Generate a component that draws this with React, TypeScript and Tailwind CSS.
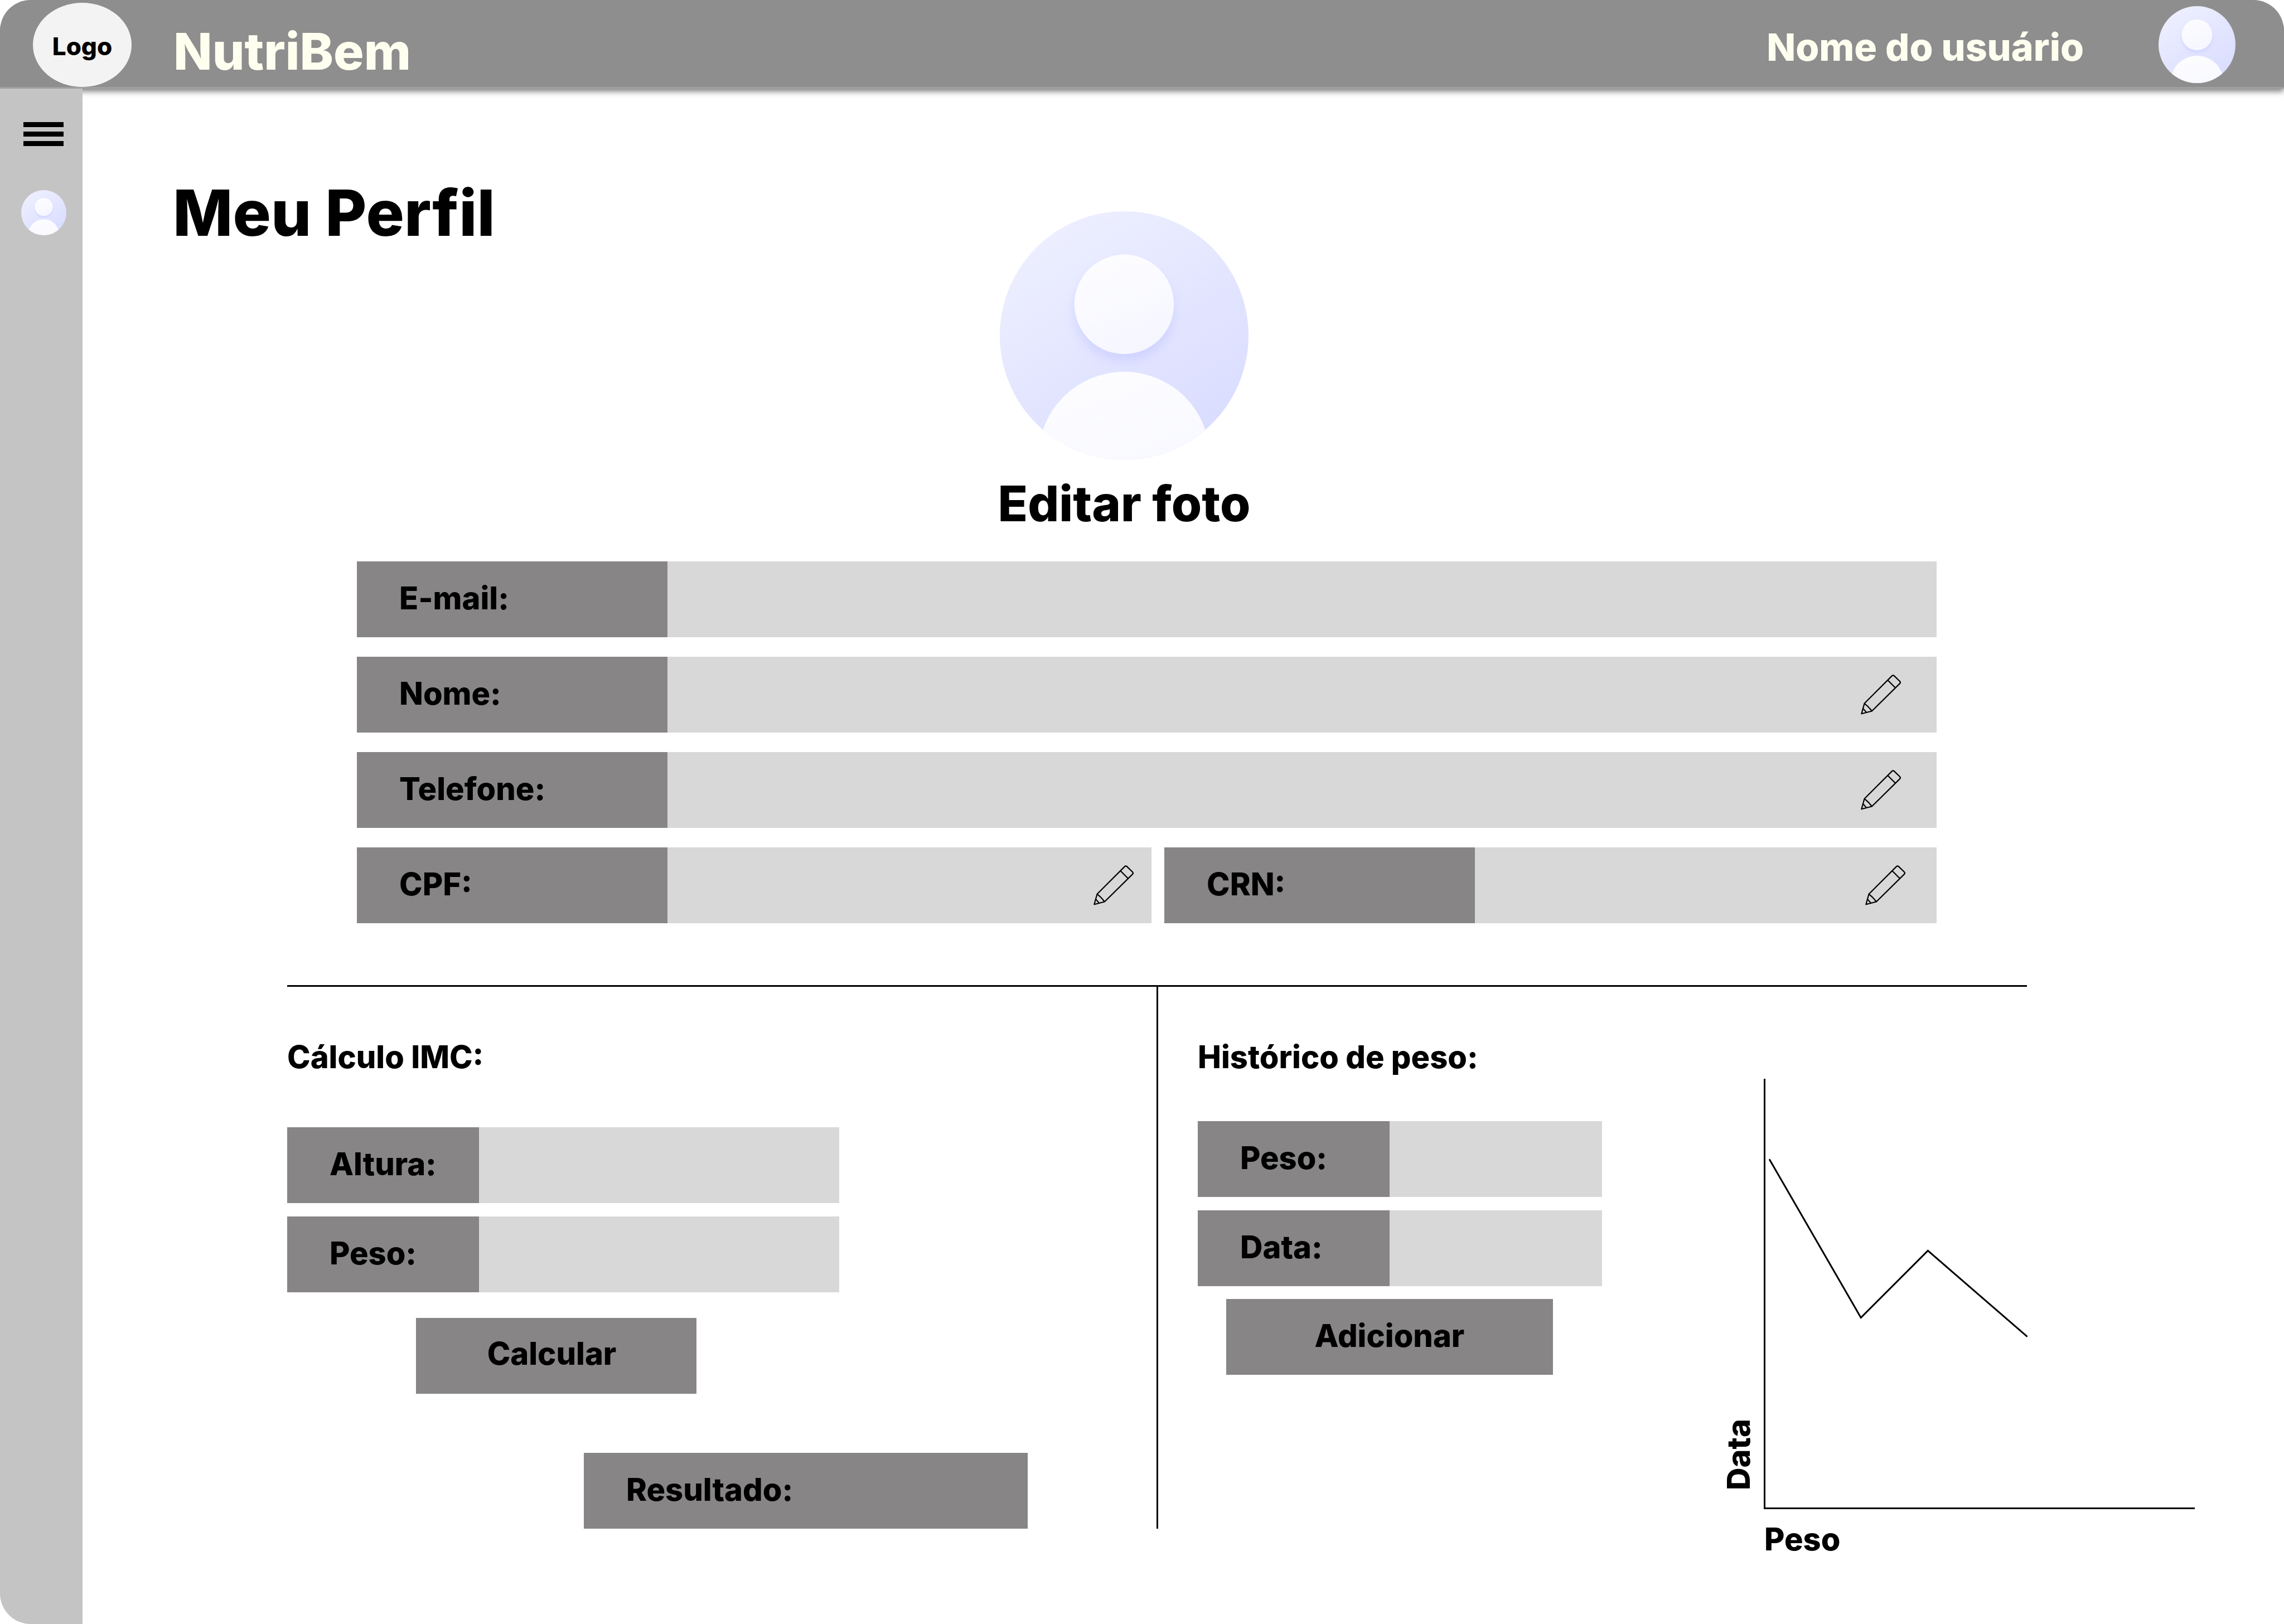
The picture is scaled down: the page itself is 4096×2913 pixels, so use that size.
import { useId } from "react";
import type { ReactNode } from "react";

function Avatar({ className }: { className: string }) {
  const id = useId();
  return (
    <svg viewBox="0 0 100 100" className={className} aria-hidden="true">
      <defs>
        <linearGradient id={`${id}bg`} x1="0.2" y1="0" x2="0.85" y2="1">
          <stop offset="0" stopColor="#eef0ff" />
          <stop offset="1" stopColor="#d8dbff" />
        </linearGradient>
        <linearGradient id={`${id}fg`} x1="0.3" y1="0" x2="0.7" y2="1">
          <stop offset="0" stopColor="#fdfdff" />
          <stop offset="1" stopColor="#f5f6ff" />
        </linearGradient>
        <clipPath id={`${id}clip`}>
          <circle cx="50" cy="50" r="50" />
        </clipPath>
        <filter id={`${id}soft`} x="-30%" y="-30%" width="160%" height="160%">
          <feDropShadow dx="0" dy="3" stdDeviation="2.2" floodColor="#b9bfff" floodOpacity="0.45" />
        </filter>
      </defs>
      <g clipPath={`url(#${id}clip)`}>
        <rect width="100" height="100" fill={`url(#${id}bg)`} />
        <circle cx="50" cy="99" r="34.5" fill={`url(#${id}fg)`} />
        <circle cx="50" cy="37.4" r="20" fill={`url(#${id}fg)`} filter={`url(#${id}soft)`} />
      </g>
    </svg>
  );
}

function Pencil() {
  return (
    <svg viewBox="0 0 105 105" className="size-[72px]" fill="none" stroke="#000" strokeWidth="3.2" strokeLinejoin="round" aria-hidden="true">
      <path d="M2 102.500 L9.500 75.500 L81.500 3.500 Q84.500 .500 87.500 3.500 L102 17.500 Q105 20.500 102 23.500 L29 95.500 Z" />
      <path d="M70.500 14.500 L90.500 34.500 M9.500 75.500 Q20 83 29 95.500 M6 89 L15 99" />
    </svg>
  );
}

type FieldProps = {
  id: string;
  label: string;
  labelWidth: string;
  editPadding?: string;
};

function Field({ id, label, labelWidth, editPadding }: FieldProps) {
  return (
    <div className="flex h-34 min-w-0 bg-[#d8d8d8]">
      <label htmlFor={id} className={`flex shrink-0 items-center bg-[#878585] pb-1 pl-[76px] ${labelWidth}`}>
        {label}
      </label>
      <input id={id} className="min-w-0 flex-1 bg-transparent px-8 font-normal outline-none" />
      {editPadding && (
        <button type="button" aria-label={`Editar ${label}`} className={`flex shrink-0 items-center ${editPadding}`}>
          <Pencil />
        </button>
      )}
    </div>
  );
}

function Heading({ children }: { children: ReactNode }) {
  return <h2 className="leading-16">{children}</h2>;
}

export default function App() {
  return (
    <div className="flex min-h-screen flex-col overflow-hidden rounded-[55px] bg-white font-['Inter',sans-serif] text-[56px] leading-16 font-extrabold text-black">
      <header className="relative flex h-[159px] items-center border-b-3 border-[#a0a0a0] bg-[#8e8e8e] pr-[87px] pl-[59px] text-[#fffff0] shadow-[0_5px_10px_rgba(0,0,0,0.5)]">
        <div className="mt-[5px] flex h-[151px] w-[177px] items-center justify-center rounded-[50%] bg-[#f3f3f3] pt-1 text-[44px] text-black">
          Logo
        </div>
        <p className="mt-7 ml-[75px] text-[91px] leading-24">NutriBem</p>
        <p className="mt-3 mr-[134px] ml-auto text-[68px] leading-20">Nome do usuário</p>
        <Avatar className="mt-1 size-[138px]" />
      </header>

      <div className="flex flex-1">
        <nav aria-label="Menu" className="relative flex w-[148px] shrink-0 flex-col items-center bg-[#c4c4c4] pt-[60px] pl-2">
          <button type="button" aria-label="Abrir menu" className="flex flex-col gap-2">
            <span className="h-[9px] w-[72px] bg-black" />
            <span className="h-[9px] w-[72px] bg-black" />
            <span className="h-[9px] w-[72px] bg-black" />
          </button>
          <a href="#perfil" aria-label="Meu perfil" className="mt-[79px]">
            <Avatar className="size-[81px]" />
          </a>
        </nav>

        <main id="perfil" className="min-w-0 flex-1 pt-40">
          <div className="grid grid-cols-[1fr_auto_1fr] pr-[374px] pl-[162px]">
            <h1 className="text-[114px] leading-[126px]">Meu Perfil</h1>
            <div className="flex flex-col items-center pt-[60px]">
              <Avatar className="size-[446px]" />
              <button type="button" className="mt-[30px] text-[88px] leading-24 whitespace-nowrap">
                Editar foto
              </button>
            </div>
          </div>

          <form className="mt-14 mr-[623px] ml-[492px] flex flex-col gap-[35px]">
            <Field id="email" label="E-mail:" labelWidth="w-[557px]" />
            <Field id="nome" label="Nome:" labelWidth="w-[557px]" editPadding="pr-16" />
            <Field id="telefone" label="Telefone:" labelWidth="w-[557px]" editPadding="pr-16" />
            <div className="grid grid-cols-[1425fr_1385fr] gap-[23px]">
              <Field id="cpf" label="CPF:" labelWidth="w-[557px]" editPadding="pr-8" />
              <Field id="crn" label="CRN:" labelWidth="w-[557px]" editPadding="pr-14" />
            </div>
          </form>

          <hr className="mt-[111px] mr-[461px] ml-[367px] border-t-3 border-black" />

          <div className="flex items-start pr-40 pl-[367px]">
            <section className="w-[1562px] shrink-0 border-r-3 border-black pt-[94px]">
              <Heading>Cálculo IMC:</Heading>
              <form className="mt-[94px] flex w-[990px] flex-col gap-6">
                <Field id="altura" label="Altura:" labelWidth="w-[344px]" />
                <Field id="peso" label="Peso:" labelWidth="w-[344px]" />
              </form>
              <button type="button" className="mt-[46px] ml-[231px] h-34 w-[503px] bg-[#878585] pr-4 pb-2">
                Calcular
              </button>
              <p className="mt-[106px] ml-[532px] flex h-34 w-[796px] items-center bg-[#878585] pb-1 pl-[76px]">
                Resultado:
              </p>
            </section>

            <section className="w-[796px] shrink-0 pt-[94px] pl-[71px]">
              <Heading>Histórico de peso:</Heading>
              <form className="mt-[83px] flex flex-col gap-6">
                <Field id="peso-historico" label="Peso:" labelWidth="w-[344px]" />
                <Field id="data-historico" label="Data:" labelWidth="w-[344px]" />
              </form>
              <button type="button" className="mt-[23px] ml-[51px] h-34 w-[586px] bg-[#878585] pb-1">
                Adicionar
              </button>
            </section>

            <figure className="ml-[213px] flex min-w-0 flex-1 items-end pt-[165px]">
              <span className="mb-[120px] w-[77px] shrink-0 rotate-180 [writing-mode:vertical-rl]">Data</span>
              <div className="min-w-0 flex-1">
                <svg viewBox="0 0 772 771" className="w-full" fill="none" stroke="#000" strokeWidth="3" role="img" aria-label="Histórico de peso">
                  <path d="M1.500 0 V769.500 H772" />
                  <path d="M10 144 L174 428 L294 308 L472 462" />
                </svg>
                <figcaption className="mt-[22px] pl-px">Peso</figcaption>
              </div>
            </figure>
          </div>
        </main>
      </div>
    </div>
  );
}
